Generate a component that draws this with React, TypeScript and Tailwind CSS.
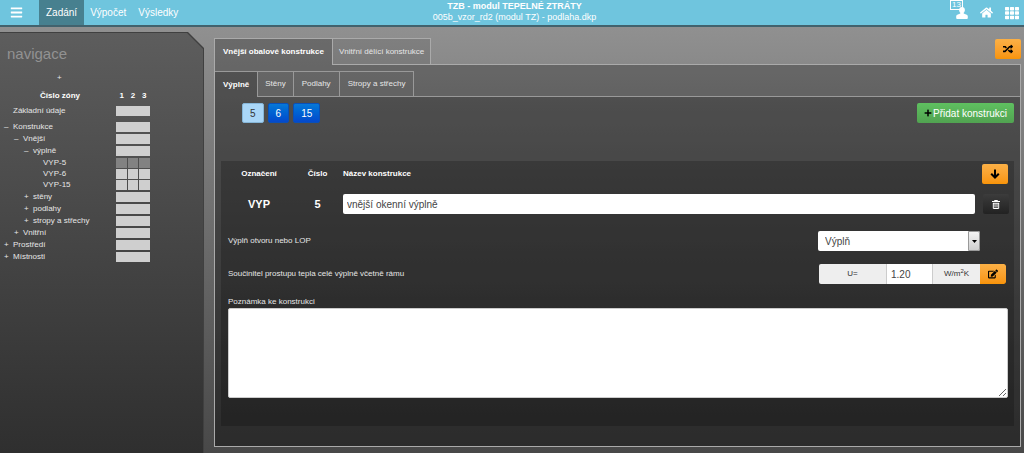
import {
    FaBars,
    FaEdit,
    FaHome,
    FaPlus,
    FaRandom,
    FaTh,
} from "react-icons/fa";
import clsx from "clsx";

const menu = ["Zadání", "Výpočet", "Výsledky"];

type TreeNode = {
    label: string;
    sign?: string;
    indent: string;
    zones?: string;
};

const tree: TreeNode[] = [
    { label: "Konstrukce", sign: "–", indent: "pl-1" },
    { label: "Vnější", sign: "–", indent: "pl-[14px]" },
    { label: "výplně", sign: "–", indent: "pl-6" },
    { label: "VYP-5", indent: "pl-[34px]", zones: "bg-[#828282]" },
    { label: "VYP-6", indent: "pl-[34px]", zones: "bg-[#cfcfcf]" },
    { label: "VYP-15", indent: "pl-[34px]", zones: "bg-[#cfcfcf]" },
    { label: "stěny", sign: "+", indent: "pl-6" },
    { label: "podlahy", sign: "+", indent: "pl-6" },
    { label: "stropy a střechy", sign: "+", indent: "pl-6" },
    { label: "Vnitřní", sign: "+", indent: "pl-[14px]" },
    { label: "Prostředí", sign: "+", indent: "pl-1" },
    { label: "Místnosti", sign: "+", indent: "pl-1" },
];

const orange = "flex items-center justify-center rounded-xs bg-linear-to-b from-[#fbb045] to-[#f89406] text-black";

const UserIcon = () => (
    <svg width="12" height="12" viewBox="0 0 12 12" fill="currentColor">
        <path d="M6 0c1.800 0 2.900 1.300 2.900 3.100 0 1.100-.5 2.100-1.200 2.700v.6l3 1.300c.8.4 1.100.9 1.100 1.700V11c0 .6-.3 1-.9 1H1.100c-.6 0-.9-.4-.9-1V9.400c0-.8.300-1.300 1.100-1.700l3-1.300v-.6C3.600 5.200 3.100 4.200 3.100 3.100 3.100 1.300 4.200 0 6 0z" />
    </svg>
);

const DownIcon = () => (
    <svg width="10" height="10" viewBox="0 0 10 10" fill="none" stroke="currentColor" strokeWidth="2">
        <path d="M5 0.500v8M1.200 4.700L5 8.500l3.800-3.800" />
    </svg>
);

const TrashIcon = () => (
    <svg width="8" height="9" viewBox="0 0 8 9" fill="none" stroke="currentColor">
        <path d="M0 1.500h8M2.500 1.500v-1h3v1M1.300 3v5.500h5.400V3M3 4v3.500M5 4v3.500M1 3.300h6" />
    </svg>
);

const Header = () => {
    return (
        <header className="grid grid-cols-[1fr_auto_1fr] h-[27px] border-b-2 border-[#42626d] bg-[#6fc5de] text-white">
            <nav className="flex text-[10px]">
                <button aria-label="Menu" className="pl-[10px] w-[39px]">
                    <FaBars size={13} />
                </button>
                {menu.map((item, i) => (
                    <a key={item} href="#" className={clsx("flex items-center px-[6px]", i === 0 && "bg-[#47808f] px-[7px]")}>
                        {item}
                    </a>
                ))}
            </nav>
            <div className="text-center text-[9px] leading-[11px] pt-px pl-[5px] whitespace-nowrap">
                <h1 className="font-bold">TZB - modul TEPELNÉ ZTRÁTY</h1>
                <p>005b_vzor_rd2 (modul TZ) - podlaha.dkp</p>
            </div>
            <div className="flex items-center justify-end gap-3 pr-[5px]">
                <a href="#" aria-label="Uživatel" className="relative">
                    <UserIcon />
                    <span className="absolute -left-[6px] -top-[7px] border border-white px-px text-[8px] leading-[8px]">13</span>
                </a>
                <a href="#" aria-label="Domů">
                    <FaHome size={13} />
                </a>
                <a href="#" aria-label="Aplikace">
                    <FaTh size={14} />
                </a>
            </div>
        </header>
    );
};

const Bar = ({ zones }: { zones?: string }) => {
    if (!zones) return <div className="h-[10px] w-[34px] bg-[#cfcfcf]" />;
    return (
        <div className="grid grid-cols-3 gap-px h-[10px] w-[34px]">
            <div className={zones} />
            <div className={zones} />
            <div className={zones} />
        </div>
    );
};

const Sidebar = () => {
    return (
        <aside className="w-[204px] shrink-0 mt-[5px] bg-[#404040] pt-px pr-px flex [clip-path:polygon(0_0,188px_0,100%_16px,100%_100%,0_100%)]">
            <div className="flex-1 bg-linear-to-b from-[#5d5d5d] to-[#2f2f2f] text-[8px] text-[#e6e6e6] [clip-path:polygon(0_0,187px_0,100%_16px,100%_100%,0_100%)]">
                <h2 className="pt-3 pl-[7px] text-[15px] leading-[18px] text-[#929292]">navigace</h2>
                <button className="block ml-[57px] mt-[10px] h-[9px] leading-[9px]">+</button>
                <div className="flex mt-[7px] h-[13px] items-center font-bold text-white">
                    <span className="w-[116px] pl-10">Číslo zóny</span>
                    <span className="grid grid-cols-3 w-[34px] text-center">
                        <span>1</span>
                        <span>2</span>
                        <span>3</span>
                    </span>
                </div>
                <div className="flex items-center h-3 mt-[3px] mb-1">
                    <a href="#" className="w-[116px] pl-[13px]">Základní údaje</a>
                    <Bar />
                </div>
                <ul>
                    {tree.map((node) => (
                        <li
                            key={node.label}
                            className={clsx("flex items-center", node.zones ? "h-[11px]" : "h-3", node.label === "VYP-15" && "mb-px")}
                        >
                            <a href="#" className={clsx("flex w-[116px] whitespace-nowrap", node.indent)}>
                                <span className="w-[9px]">{node.sign}</span>
                                {node.label}
                            </a>
                            <Bar zones={node.zones} />
                        </li>
                    ))}
                </ul>
            </div>
        </aside>
    );
};

const DetailForm = () => {
    return (
        <form className="mx-[6px] mt-[38px] mb-5 pb-[28px] bg-black/20">
            <table className="w-full table-fixed text-white">
                <thead>
                    <tr className="h-[26px] text-[8px]">
                        <th className="w-[76px]">Označení</th>
                        <th className="w-[41px]">Číslo</th>
                        <th className="pl-[5px] text-left">Název konstrukce</th>
                        <th className="w-[39px]">
                            <button type="button" aria-label="Dolů" className={clsx(orange, "w-[26px] h-5 ml-[7px]")}>
                                <DownIcon />
                            </button>
                        </th>
                    </tr>
                </thead>
                <tbody>
                    <tr className="h-[34px] text-[11px] font-bold text-center">
                        <td>VYP</td>
                        <td>5</td>
                        <td className="pl-[5px]">
                            <input
                                aria-label="Název konstrukce"
                                defaultValue="vnější okenní výplně"
                                className="block w-full h-5 rounded-xs bg-white px-1 text-[10px] font-normal text-[#444]"
                            />
                        </td>
                        <td>
                            <button
                                type="button"
                                aria-label="Smazat"
                                className="flex items-center justify-center w-[26px] h-5 ml-2 rounded-xs bg-linear-to-b from-[#3c3c3c] to-[#222]"
                            >
                                <TrashIcon />
                            </button>
                        </td>
                    </tr>
                </tbody>
            </table>

            <div className="pl-[7px] pr-[6px] text-[8px] text-[#e6e6e6]">
                <div className="flex items-center justify-between mt-[10px] pr-7">
                    <label htmlFor="typ">Výplň otvoru nebo LOP</label>
                    <div className="relative">
                        <select id="typ" className="block appearance-none w-[162px] h-5 rounded-xs bg-white pl-[7px] text-[10px] text-[#444]">
                            <option>Výplň</option>
                        </select>
                        <span className="pointer-events-none absolute right-0 top-0 flex items-center justify-center w-3 h-5 rounded-r-xs border border-[#999] bg-linear-to-b from-[#f4f4f4] to-[#cfcfcf]">
                            <svg width="5" height="3" viewBox="0 0 5 3">
                                <path d="M0 0h5L2.500 3z" fill="#000" />
                            </svg>
                        </span>
                    </div>
                </div>
                <div className="flex items-center justify-between mt-[13px] pr-[2px]">
                    <label htmlFor="soucinitel">Součinitel prostupu tepla celé výplně včetně rámu</label>
                    <div className="flex h-5 rounded-xs overflow-hidden text-[#333]">
                        <span className="flex items-center justify-center w-[68px] bg-[#eee] border-r border-[#ccc]">U=</span>
                        <input id="soucinitel" defaultValue="1.20" className="w-[45px] bg-white px-1 text-[10px] text-[#444]" />
                        <span className="flex items-center justify-center w-12 bg-[#eee] border-l border-[#ccc]">
                            <span>
                                W/m<sup>2</sup>K
                            </span>
                        </span>
                        <button type="button" aria-label="Upravit" className={clsx(orange, "w-[26px] rounded-l-none")}>
                            <FaEdit size={10} />
                        </button>
                    </div>
                </div>
                <label htmlFor="poznamka" className="block mt-[11px] h-[13px] leading-[13px]">
                    Poznámka ke konstrukci
                </label>
                <textarea id="poznamka" className="block w-full h-[90px] rounded-xs border border-[#ccc] bg-white p-1 text-[10px] text-[#444]" />
            </div>
        </form>
    );
};

const Main = () => {
    return (
        <main className="flex-1 min-w-0 flex flex-col ml-[10px] mr-[3px] mt-[11px] mb-[6px] text-[8px] text-[#e6e6e6]">
            <div className="flex h-[27px]">
                <button className="px-2 border border-b-0 border-[#aaa] bg-black/25 font-bold text-white">Vnější obalové konstrukce</button>
                <button className="px-[6px] border border-l-0 border-[#aaa] bg-black/10">Vnitřní dělící konstrukce</button>
                <div className="flex-1 flex justify-end border-b border-[#aaa]">
                    <button aria-label="Přepnout" className={clsx(orange, "w-[26px] h-5 mt-px")}>
                        <FaRandom size={10} />
                    </button>
                </div>
            </div>
            <div className="flex-1 border border-t-0 border-[#aaa] bg-black/25 pt-[6px] flex flex-col">
                <div className="flex h-[26px]">
                    <button className="px-2 border border-l-0 border-b-0 border-[#999] bg-black/20 font-bold text-white">Výplně</button>
                    <button className="px-[7px] border border-l-0 border-[#999]">Stěny</button>
                    <button className="px-2 border border-l-0 border-[#999]">Podlahy</button>
                    <button className="px-2 border border-l-0 border-[#999]">Stropy a střechy</button>
                    <div className="flex-1 border-b border-[#999]" />
                </div>
                <div className="flex-1 bg-black/20">
                    <div className="flex justify-between pt-[6px] pl-[27px] pr-[6px] text-[10px]">
                        <div className="flex gap-1 text-white">
                            <button className="h-5 px-[7px] rounded-xs border border-[#86b6d8] bg-[#a9d6f7] text-[#333]">5</button>
                            <button className="h-5 px-[7px] rounded-xs border border-[#0a50b8] bg-linear-to-b from-[#0878d8] to-[#0548cc]">6</button>
                            <button className="h-5 px-[7px] rounded-xs border border-[#0a50b8] bg-linear-to-b from-[#0878d8] to-[#0548cc]">15</button>
                        </div>
                        <button className="flex items-center gap-px h-5 px-[7px] rounded-xs bg-linear-to-b from-[#5fc060] to-[#51a351] text-white">
                            <FaPlus size={8} className="text-black" />
                            Přidat konstrukci
                        </button>
                    </div>
                    <DetailForm />
                </div>
            </div>
        </main>
    );
};

export default function App() {
    return (
        <div className="min-h-screen flex flex-col bg-linear-to-b from-[#959595] to-[#484848] font-['Liberation_Sans',Arial,sans-serif]">
            <Header />
            <div className="flex-1 flex">
                <Sidebar />
                <Main />
            </div>
        </div>
    );
}
